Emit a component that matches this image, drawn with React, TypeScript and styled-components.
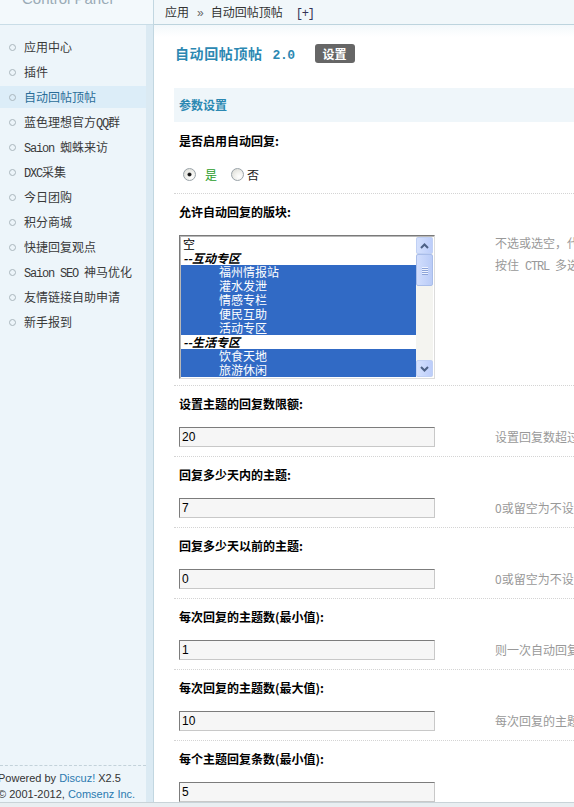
import React from 'react';
import styled, { createGlobalStyle, css } from 'styled-components';

const GlobalStyle = createGlobalStyle`
  html, body {
    margin: 0;
    padding: 0;
  }

  body {
    width: 574px;
    height: 807px;
    overflow: hidden;
    background: #fff;
    font: 12px "Noto Sans CJK SC", "Liberation Sans", sans-serif;
    color: #333;
  }
`;

const FrameStyled = styled.div`
  display: flex;
  flex-direction: column;
  height: 807px;
`;

const BodyStyled = styled.div`
  display: flex;
  height: 802px;
`;

const BottomBarStyled = styled.div`
  flex: 1;
  border-top: 1px solid #c9d3d8;
  background: #e9eef1;
`;

/* ---------- sidebar ---------- */

const SidebarStyled = styled.aside`
  width: 153px;
  flex: none;
  display: flex;
  flex-direction: column;
`;

const SideTopStyled = styled.div`
  height: 24px;
  overflow: hidden;
  border-bottom: 1px solid #c9dde7;
  background: #f3f9fc;
`;

const BrandStyled = styled.div`
  margin: -9px 0 0 22px;
  font: 15px/15px "Liberation Sans", sans-serif;
  color: #9aabb6;
  white-space: nowrap;
`;

const SideBodyStyled = styled.div`
  flex: 1;
  display: flex;
  min-height: 0;
`;

const MenuColumnStyled = styled.div`
  width: 146px;
  display: flex;
  flex-direction: column;
  background: #edf5fa;
`;

const SideStripStyled = styled.div`
  flex: 1;
  background: #dbeaf3;
`;

const MenuListStyled = styled.ul`
  list-style: none;
  margin: 0;
  padding: 11px 0 0;
  display: flex;
  flex-direction: column;
  gap: 3px;
`;

const MenuItemStyled = styled.li<{ $active?: boolean }>`
  position: relative;
  height: 22px;
  line-height: 22px;
  padding-left: 24px;
  color: #3a3a3a;
  white-space: nowrap;

  &::before {
    content: '';
    position: absolute;
    left: 9px;
    top: 8px;
    width: 5px;
    height: 5px;
    border: 1px solid #a9b5bc;
    border-radius: 50%;
  }

  ${({ $active }) =>
    $active &&
    css`
      background: #dcedf8;
      color: #2a6d99;
    `}
`;

const LatinStyled = styled.span`
  font: 12px "Liberation Mono", monospace;
  letter-spacing: -1.2px;
  white-space: pre;
`;

const SideFooterStyled = styled.div`
  margin-top: auto;
  border-top: 1px dashed #c3d2da;
  padding-top: 4px;
  font: 11px/16px "Liberation Sans", sans-serif;
  color: #333;
  white-space: nowrap;
`;

const FooterLineStyled = styled.div`
  margin-left: -2px;
`;

const FooterLinkStyled = styled.span`
  color: #2b7ab0;
`;

/* ---------- main ---------- */

const MainStyled = styled.main`
  flex: 1;
  min-width: 0;
  display: flex;
  flex-direction: column;
  overflow: hidden;
  border-left: 1px solid #c2d7e1;
`;

const HeaderStyled = styled.div`
  height: 24px;
  line-height: 24px;
  padding-left: 11px;
  border-bottom: 1px solid #bdd4de;
  background: #f1f7fa;
  color: #333;
  white-space: nowrap;
`;

const CrumbSepStyled = styled.span`
  margin: 0 7px 0 8px;
  color: #666;
  font-family: "Liberation Sans", sans-serif;
`;

const CrumbPlusStyled = styled.span`
  margin-left: 13px;
  color: #335;
`;

const ContentStyled = styled.div`
  flex: 1;
  padding-left: 20px;
  background: linear-gradient(#f3f8fb, #fff 12px);
`;

const TitleRowStyled = styled.div`
  display: flex;
  align-items: center;
  height: 20px;
  margin-top: 18px;
  padding-left: 1px;
`;

const TitleStyled = styled.h3`
  margin: 0;
  font-size: 14px;
  font-weight: bold;
  letter-spacing: 0.6px;
  color: #2b88b2;
  white-space: nowrap;
`;

const VersionStyled = styled.span`
  margin-left: 10px;
  font: bold 13px "Liberation Mono", monospace;
  letter-spacing: -0.5px;
`;

const BadgeStyled = styled.span`
  margin-left: 20px;
  height: 19px;
  line-height: 19px;
  padding: 0 8px;
  border-radius: 3px;
  background: #666;
  color: #fff;
  font-weight: bold;
`;

const SectionHeaderStyled = styled.div`
  margin-top: 25px;
  height: 34px;
  line-height: 34px;
  padding-left: 5px;
  background: #eff6fa;
  color: #2b88b2;
  font-weight: bold;
`;

const RowStyled = styled.div<{ $first?: boolean; $tight?: boolean }>`
  display: grid;
  grid-template-columns: 316px auto;
  grid-template-rows: 35px auto;
  padding: 0 0 ${({ $tight }) => ($tight ? 6 : 9)}px 5px;
  border-top: 1px dotted #d4d4d4;

  ${({ $first }) =>
    $first &&
    css`
      border-top: 0;
      padding-top: 1px;
    `}
`;

const LabelStyled = styled.div`
  grid-column: 1 / -1;
  line-height: 35px;
  font-weight: bold;
  color: #000;
  white-space: nowrap;
`;

const ControlStyled = styled.div`
  margin-top: 6px;
`;

const TipStyled = styled.div<{ $multi?: boolean }>`
  margin-top: ${({ $multi }) => ($multi ? 3 : 6)}px;
  line-height: ${({ $multi }) => ($multi ? 22 : 20)}px;
  color: #999;
  white-space: nowrap;
`;

const InputStyled = styled.input`
  display: block;
  box-sizing: border-box;
  width: 256px;
  height: 20px;
  margin: 0;
  padding: 0 2px;
  border: 1px solid;
  border-color: #7c7c7c #c8c8c8 #c8c8c8 #7c7c7c;
  background: #f6f6f6;
  font: 12px "Liberation Sans", sans-serif;
  color: #000;
  outline: none;
`;

const RadioGroupStyled = styled.div`
  display: flex;
  align-items: center;
  height: 20px;
  padding-left: 4px;
`;

const RadioOptionStyled = styled.label<{ $gap: number }>`
  display: inline-flex;
  align-items: center;
  gap: ${({ $gap }) => $gap}px;
  margin-right: 14px;
`;

const RadioDotStyled = styled.span<{ $checked?: boolean }>`
  position: relative;
  width: 13px;
  height: 13px;
  box-sizing: border-box;
  border: 1px solid #9aa3a9;
  border-radius: 50%;
  background: radial-gradient(circle at 65% 70%, #fff 0, #f2f2ee 40%, #d6d6d0 100%);

  ${({ $checked }) =>
    $checked &&
    css`
      &::after {
        content: '';
        position: absolute;
        left: 4px;
        top: 4px;
        width: 3px;
        height: 3px;
        border-radius: 50%;
        background: #111;
        box-shadow: 0 0 0 0.6px #444;
      }
    `}
`;

const RadioTextStyled = styled.span<{ $color: string }>`
  color: ${({ $color }) => $color};
`;

/* ---------- list box ---------- */

const ListBoxStyled = styled.div`
  box-sizing: border-box;
  width: 256px;
  height: 144px;
  display: flex;
  padding: 1px;
  border: 1px solid;
  border-color: #7a7a7a #dcdcdc #dcdcdc #7a7a7a;
  box-shadow: inset 1px 1px 0 #b8b8b8;
  background: #fff;
`;

const OptionListStyled = styled.div`
  flex: 1;
  overflow: hidden;
`;

const OptionStyled = styled.div<{ $kind: 'plain' | 'group' | 'child'; $selected?: boolean }>`
  height: 14px;
  line-height: 14px;
  padding-left: ${({ $kind }) => ($kind === 'child' ? 38 : 2)}px;
  color: #000;
  white-space: nowrap;

  ${({ $kind }) =>
    $kind === 'group' &&
    css`
      font-weight: bold;
      font-style: italic;
    `}

  ${({ $selected }) =>
    $selected &&
    css`
      background: #316ac5;
      color: #fff;
    `}
`;

const ScrollbarStyled = styled.div`
  width: 17px;
  display: flex;
  flex-direction: column;
  background: #f4f4f0;
`;

const ScrollButtonStyled = styled.div`
  box-sizing: border-box;
  height: 17px;
  display: flex;
  align-items: center;
  justify-content: center;
  border: 1px solid #c0d0f4;
  border-radius: 2px;
  background: linear-gradient(90deg, #d5e1fd, #bccdfa);
`;

const ScrollThumbStyled = styled.div`
  box-sizing: border-box;
  height: 32px;
  display: flex;
  flex-direction: column;
  align-items: center;
  justify-content: center;
  gap: 1px;
  border: 1px solid #a9bde9;
  border-radius: 2px;
  background: linear-gradient(90deg, #d2defd, #b9cbf7);
`;

const GripLineStyled = styled.span`
  width: 6px;
  height: 1px;
  background: #eef3ff;
  box-shadow: 0 1px 0 #8ca3d8;
`;

const ScrollTrackStyled = styled.div`
  flex: 1;
`;

const Chevron = ({ up }: { up?: boolean }) => (
  <svg width="9" height="6" viewBox="0 0 9 6">
    <path
      d={up ? 'M1 5 L4.5 1.5 L8 5' : 'M1 1 L4.5 4.5 L8 1'}
      fill="none"
      stroke="#4d6185"
      strokeWidth="2"
    />
  </svg>
);

/* ---------- data ---------- */

const menuItems: { key: string; node: React.ReactNode; active?: boolean }[] = [
  { key: 'center', node: '应用中心' },
  { key: 'plugin', node: '插件' },
  { key: 'auto', node: '自动回帖顶帖', active: true },
  { key: 'qq', node: <>蓝色理想官方<LatinStyled>QQ</LatinStyled>群</> },
  { key: 'spider', node: <><LatinStyled>Saion </LatinStyled>蜘蛛来访</> },
  { key: 'dxc', node: <><LatinStyled>DXC</LatinStyled>采集</> },
  { key: 'group', node: '今日团购' },
  { key: 'shop', node: '积分商城' },
  { key: 'reply', node: '快捷回复观点' },
  { key: 'seo', node: <><LatinStyled>Saion SEO </LatinStyled>神马优化</> },
  { key: 'link', node: '友情链接自助申请' },
  { key: 'new', node: '新手报到' },
];

const forumOptions: { label: string; kind: 'plain' | 'group' | 'child'; selected?: boolean }[] = [
  { label: '空', kind: 'plain' },
  { label: '--互动专区', kind: 'group' },
  { label: '福州情报站', kind: 'child', selected: true },
  { label: '灌水发泄', kind: 'child', selected: true },
  { label: '情感专栏', kind: 'child', selected: true },
  { label: '便民互助', kind: 'child', selected: true },
  { label: '活动专区', kind: 'child', selected: true },
  { label: '--生活专区', kind: 'group' },
  { label: '饮食天地', kind: 'child', selected: true },
  { label: '旅游休闲', kind: 'child', selected: true },
];

const numberRows = [
  { label: '设置主题的回复数限额:', value: '20', tip: '设置回复数超过此数值的主题不再自动回复' },
  { label: '回复多少天内的主题:', value: '7', tip: '0或留空为不设置' },
  { label: '回复多少天以前的主题:', value: '0', tip: '0或留空为不设置' },
  { label: '每次回复的主题数(最小值):', value: '1', tip: '则一次自动回复的主题数为随机值' },
  { label: '每次回复的主题数(最大值):', value: '10', tip: '每次回复的主题数上限' },
  { label: '每个主题回复条数(最小值):', value: '5', tip: '' },
];

/* ---------- parts ---------- */

const Sidebar = () => (
  <SidebarStyled>
    <SideTopStyled>
      <BrandStyled>Control Panel</BrandStyled>
    </SideTopStyled>
    <SideBodyStyled>
      <MenuColumnStyled>
        <MenuListStyled>
          {menuItems.map((item) => (
            <MenuItemStyled key={item.key} $active={item.active}>
              {item.node}
            </MenuItemStyled>
          ))}
        </MenuListStyled>
        <SideFooterStyled>
          <FooterLineStyled>
            Powered by <FooterLinkStyled>Discuz!</FooterLinkStyled> X2.5
          </FooterLineStyled>
          <FooterLineStyled>
            © 2001-2012, <FooterLinkStyled>Comsenz Inc.</FooterLinkStyled>
          </FooterLineStyled>
        </SideFooterStyled>
      </MenuColumnStyled>
      <SideStripStyled />
    </SideBodyStyled>
  </SidebarStyled>
);

const ForumListBox = () => (
  <ListBoxStyled>
    <OptionListStyled>
      {forumOptions.map((opt) => (
        <OptionStyled key={opt.label} $kind={opt.kind} $selected={opt.selected}>
          {opt.label}
        </OptionStyled>
      ))}
    </OptionListStyled>
    <ScrollbarStyled>
      <ScrollButtonStyled>
        <Chevron up />
      </ScrollButtonStyled>
      <ScrollThumbStyled>
        <GripLineStyled />
        <GripLineStyled />
        <GripLineStyled />
        <GripLineStyled />
      </ScrollThumbStyled>
      <ScrollTrackStyled />
      <ScrollButtonStyled>
        <Chevron />
      </ScrollButtonStyled>
    </ScrollbarStyled>
  </ListBoxStyled>
);

export default function App() {
  return (
    <>
      <GlobalStyle />
      <FrameStyled>
        <BodyStyled>
          <Sidebar />
          <MainStyled>
            <HeaderStyled>
              应用<CrumbSepStyled>»</CrumbSepStyled>自动回帖顶帖
              <CrumbPlusStyled>
                <LatinStyled>[+]</LatinStyled>
              </CrumbPlusStyled>
            </HeaderStyled>

            <ContentStyled>
              <TitleRowStyled>
                <TitleStyled>
                  自动回帖顶帖<VersionStyled>2.0</VersionStyled>
                </TitleStyled>
                <BadgeStyled>设置</BadgeStyled>
              </TitleRowStyled>

              <SectionHeaderStyled>参数设置</SectionHeaderStyled>

              <RowStyled $first>
                <LabelStyled>是否启用自动回复:</LabelStyled>
                <ControlStyled>
                  <RadioGroupStyled>
                    <RadioOptionStyled $gap={9}>
                      <RadioDotStyled $checked />
                      <RadioTextStyled $color="#2a9d2a">是</RadioTextStyled>
                    </RadioOptionStyled>
                    <RadioOptionStyled $gap={3}>
                      <RadioDotStyled />
                      <RadioTextStyled $color="#222">否</RadioTextStyled>
                    </RadioOptionStyled>
                  </RadioGroupStyled>
                </ControlStyled>
              </RowStyled>

              <RowStyled $tight>
                <LabelStyled>允许自动回复的版块:</LabelStyled>
                <ControlStyled>
                  <ForumListBox />
                </ControlStyled>
                <TipStyled $multi>
                  <div>不选或选空，代表全部版块都自动回复</div>
                  <div>
                    按住<LatinStyled> CTRL </LatinStyled>多选
                  </div>
                </TipStyled>
              </RowStyled>

              {numberRows.map((row) => (
                <RowStyled key={row.label}>
                  <LabelStyled>{row.label}</LabelStyled>
                  <ControlStyled>
                    <InputStyled defaultValue={row.value} />
                  </ControlStyled>
                  <TipStyled>{row.tip}</TipStyled>
                </RowStyled>
              ))}
            </ContentStyled>
          </MainStyled>
        </BodyStyled>
        <BottomBarStyled />
      </FrameStyled>
    </>
  );
}
